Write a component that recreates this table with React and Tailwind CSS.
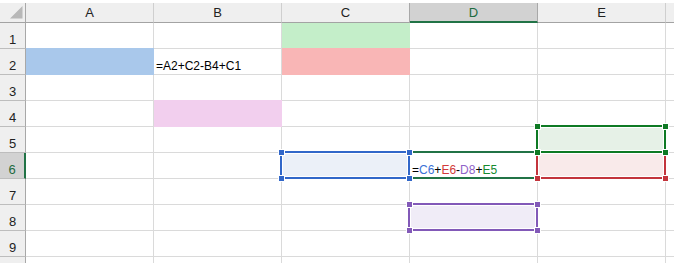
import React from "react";

const COLS = ["A", "B", "C", "D", "E"];
const ROWS = [1, 2, 3, 4, 5, 6, 7, 8, 9, 10];

// solid cell fills; shadow covers the gridline above so the colour runs edge to edge
const FILLS = {
  A2: "bg-[#a9c8eb] border-[#a9c8eb] shadow-[0_-1px_0_#a9c8eb]",
  C1: "bg-[#c4eec9] border-[#c4eec9]",
  C2: "bg-[#f9b6b6] border-[#f9b6b6] shadow-[0_-1px_0_#f9b6b6]",
  B4: "bg-[#f2cfee] border-[#f2cfee] shadow-[0_-1px_0_#f2cfee]",
};

// reference outlines drawn while the formula in D6 is edited
const RANGES = {
  D6: { box: "border-[#217346] z-10" },
  E6: { box: "border-[#c3343c] bg-white p-px z-20", fill: "bg-[#f9eaea]", handle: "bg-[#c3343c]" },
  E5: { box: "border-[#0e7a24] bg-white p-px z-30", fill: "bg-[#e6f1e7]", handle: "bg-[#0e7a24]" },
  C6: { box: "border-[#3167c9] bg-white p-px z-40", fill: "bg-[#ebf0f8]", handle: "bg-[#3167c9]" },
  D8: { box: "border-[#8259b8] bg-white p-px z-40", fill: "bg-[#f0ecf7]", handle: "bg-[#8259b8]" },
};

function Handle({ pos, color }) {
  return <div className={`absolute w-[7px] h-[7px] border border-white ${pos} ${color}`} />;
}

function Range({ r }) {
  return (
    <div className={`absolute -left-[2px] -top-[2px] w-[130px] h-[28px] border-2 ${r.box}`}>
      {r.fill && <div className={`w-full h-full ${r.fill}`} />}
      {r.handle && (
        <>
          <Handle pos="-left-[4px] -top-[4px]" color={r.handle} />
          <Handle pos="-right-[5px] -top-[4px]" color={r.handle} />
          <Handle pos="-left-[4px] -bottom-[5px]" color={r.handle} />
          <Handle pos="-right-[5px] -bottom-[5px]" color={r.handle} />
        </>
      )}
    </div>
  );
}

function CellText({ id }) {
  if (id === "B2") return <span>=A2+C2-B4+C1</span>;
  if (id === "D6")
    return (
      <span>
        =<span className="text-[#3b72d6]">C6</span>+<span className="text-[#d23a3a]">E6</span>-
        <span className="text-[#8f63c9]">D8</span>+<span className="text-[#168a2e]">E5</span>
      </span>
    );
  return null;
}

export default function App() {
  return (
    <div className="w-[674px] h-[263px] overflow-hidden bg-white pt-[3px] font-['Liberation_Sans',Arial,sans-serif] text-black">
      <div className="grid grid-cols-[26px_repeat(5,128px)_1fr] grid-rows-[20px_repeat(10,26px)]">
        {/* corner */}
        <div className="relative bg-[#efefef] border-r border-b border-r-[#a8a8a8] border-b-[#a3a3a3]">
          <svg className="absolute left-0 top-0" width="26" height="20" viewBox="0 0 26 20">
            <polygon points="22.5,3 22.5,15.5 10,15.5" fill="#b8b8b8" />
          </svg>
        </div>
        {COLS.map((c) => (
          <div
            key={c}
            className={
              c === "D"
                ? "flex items-center justify-center bg-[#d2d2d2] border-r border-r-[#a8a8a8] border-b-2 border-b-[#217346] text-[13px] leading-[13px] text-[#1d6b40]"
                : c === "C"
                ? "flex items-center justify-center bg-[#efefef] border-r border-r-[#a8a8a8] border-b border-b-[#a3a3a3] text-[13px] leading-[13px] text-[#222]"
                : "flex items-center justify-center bg-[#efefef] border-r border-r-[#cfcfcf] border-b border-b-[#a3a3a3] text-[13px] leading-[13px] text-[#222]"
            }
          >
            {c}
          </div>
        ))}
        <div className="bg-[#efefef] border-b border-b-[#a3a3a3]" />

        {ROWS.map((r) => (
          <React.Fragment key={r}>
            <div
              className={
                r === 6
                  ? "flex items-end justify-center pb-[2px] bg-[#d2d2d2] border-r-2 border-r-[#217346] border-b border-b-[#bdbdbd] text-[13px] leading-[13px] text-[#1d6b40]"
                  : "flex items-end justify-center pb-[2px] bg-[#efefef] border-r border-r-[#a8a8a8] border-b border-b-[#bdbdbd] text-[13px] leading-[13px] text-[#222]"
              }
            >
              {/* last row only peeks in at the bottom edge, its number stays below the fold */}
              {r < 10 ? r : null}
            </div>
            {COLS.map((c) => {
              const id = c + r;
              const range = RANGES[id];
              return (
                <div
                  key={id}
                  className={`flex items-end px-[2px] pb-[2px] border-r border-b text-[12px] leading-[12px] whitespace-nowrap ${
                    FILLS[id] || "border-[#dadada]"
                  } ${range ? "relative" : ""}`}
                >
                  <CellText id={id} />
                  {range && <Range r={range} />}
                </div>
              );
            })}
            <div className="border-b border-[#dadada]" />
          </React.Fragment>
        ))}
      </div>
    </div>
  );
}
